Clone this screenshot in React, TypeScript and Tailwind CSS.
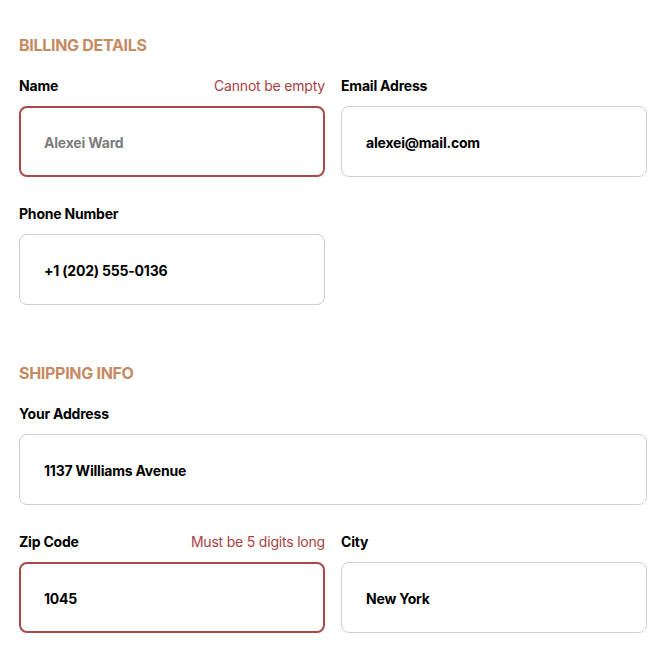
import React from 'react';

interface FieldProps {
  label: string;
  value: string;
  error?: string;
  placeholder?: boolean;
  wide?: boolean;
}

function Field({ label, value, error, placeholder, wide }: FieldProps) {
  return (
    <div className={wide ? 'col-span-2' : ''}>
      <div className="flex h-4 items-center justify-between">
        <span className="text-[14px] font-bold tracking-[-0.2px] text-black">{label}</span>
        {error && <span className="text-[14px] font-normal tracking-[-0.2px] text-[#a8413f]">{error}</span>}
      </div>
      <div
        className={
          'mt-[13px] flex h-[71px] items-center rounded-lg bg-white pl-6 pt-[1px] ' +
          (error ? 'border-2 border-[#a84a47] pl-[23px]' : 'border border-[#cfcfcf]')
        }
      >
        <span
          className={
            'text-[14px] font-bold tracking-[-0.2px] ' + (placeholder ? 'text-[#7d7d7d]' : 'text-black')
          }
        >
          {value}
        </span>
      </div>
    </div>
  );
}

export default function App() {
  return (
    <div className="min-h-[666px] bg-white px-[19px] pt-[37px] font-['Inter','Liberation_Sans',sans-serif]">
      {/* Billing */}
      <h2 className="h-4 text-[16px] font-bold leading-4 tracking-[-0.3px] text-[#c48b63]">BILLING DETAILS</h2>
      <div className="mt-[24px] grid grid-cols-2 gap-x-4 gap-y-[28px]">
        <Field label="Name" value="Alexei Ward" error="Cannot be empty" placeholder />
        <Field label="Email Adress" value="alexei@mail.com" />
        <Field label="Phone Number" value="+1 (202) 555-0136" />
      </div>

      {/* Shipping */}
      <h2 className="mt-[60px] h-4 text-[16px] font-bold leading-4 tracking-[-0.3px] text-[#c48b63]">SHIPPING INFO</h2>
      <div className="mt-[24px] grid grid-cols-2 gap-x-4 gap-y-[28px]">
        <Field label="Your Address" value="1137 Williams Avenue" wide />
        <Field label="Zip Code" value="1045" error="Must be 5 digits long" />
        <Field label="City" value="New York" />
      </div>
    </div>
  );
}
